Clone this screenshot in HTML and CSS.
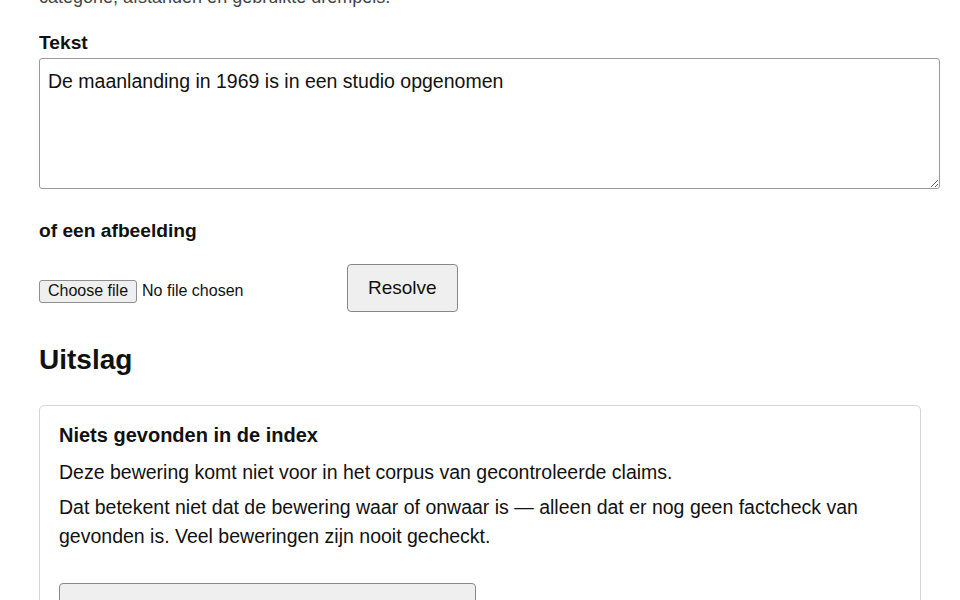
FILE: index.html
```html
<!DOCTYPE html>
<html lang="nl">
<head>
<meta charset="utf-8">
<title>Claim resolver</title>
<link rel="stylesheet" href="styles.css">
</head>
<body>
<main class="page">
  <p class="intro">categorie, afstanden en gebruikte drempels.</p>
  <form class="form">
    <label class="label" for="tekst">Tekst</label>
    <textarea id="tekst" class="textarea">De maanlanding in 1969 is in een studio opgenomen</textarea>
    <p class="label label-alt">of een afbeelding</p>
    <div class="row">
      <div class="file">
        <label class="file-btn">Choose file<input class="file-input" type="file"></label>
        <span class="file-name">No file chosen</span>
      </div>
      <button class="btn" type="button">Resolve</button>
    </div>
  </form>
  <h2 class="heading">Uitslag</h2>
  <section class="card">
    <h3 class="card-title">Niets gevonden in de index</h3>
    <p class="card-text first">Deze bewering komt niet voor in het corpus van gecontroleerde claims.</p>
    <p class="card-text">Dat betekent niet dat de bewering waar of onwaar is — alleen dat er nog geen factcheck van gevonden is. Veel beweringen zijn nooit gecheckt.</p>
    <button class="btn btn-wide" type="button">&nbsp;</button>
  </section>
</main>
</body>
</html>
```
FILE: styles.css
```css
html, body {
  margin: 0;
  padding: 0;
  background: #fff;
}
body {
  font-family: "Liberation Sans", Arial, Helvetica, sans-serif;
  color: #111;
  font-size: 19.5px;
  overflow: hidden;
}
.page {
  padding: 0 39px;
  margin-top: -17px;
}
.intro {
  margin: 0;
  font-size: 18px;
  line-height: 28px;
  color: #444;
}
.form {
  display: flex;
  flex-direction: column;
  align-items: flex-start;
}
.label {
  display: block;
  margin: 20px 0 3px;
  font-weight: bold;
  line-height: 24px;
  font-size: 19.2px;
}
.label-alt {
  margin: 30px 0 21px;
}
.textarea {
  box-sizing: border-box;
  width: 901px;
  height: 131px;
  margin: 0;
  padding: 8px;
  border: 1px solid #999;
  border-radius: 3px;
  font-family: inherit;
  font-size: 19.5px;
  line-height: 28px;
  color: #111;
  resize: vertical;
}
.row {
  display: flex;
  align-items: center;
  gap: 8px;
}
.file {
  width: 300px;
  margin-top: 6px;
  display: flex;
  align-items: center;
  gap: 5px;
  font-size: 16px;
}
.file-btn {
  box-sizing: border-box;
  height: 23px;
  padding: 0 8px;
  display: flex;
  align-items: center;
  background: #efefef;
  border: 1px solid #8f8f8f;
  border-radius: 3px;
  color: #111;
}
.file-input {
  display: none;
}
.file-name {
  color: #111;
}
.btn {
  box-sizing: border-box;
  height: 48px;
  padding: 0 20px;
  font-family: inherit;
  font-size: 19px;
  color: #111;
  background: #efefef;
  border: 1px solid #888;
  border-radius: 4px;
}
.heading {
  margin: 31px 0 28px;
  font-size: 28px;
  line-height: 34px;
  font-weight: bold;
}
.card {
  width: 882px;
  box-sizing: border-box;
  border: 1px solid #d6d6d6;
  border-radius: 5px;
  padding: 16px 19px 20px;
}
.card-title {
  margin: 0;
  font-size: 20px;
  line-height: 26px;
  font-weight: bold;
}
.card-text {
  margin: 6px 0 0;
  line-height: 29px;
  font-size: 19.5px;
}
.card-text.first {
  margin-top: 10px;
}
.btn-wide {
  display: block;
  width: 417px;
  margin-top: 32px;
}
```
